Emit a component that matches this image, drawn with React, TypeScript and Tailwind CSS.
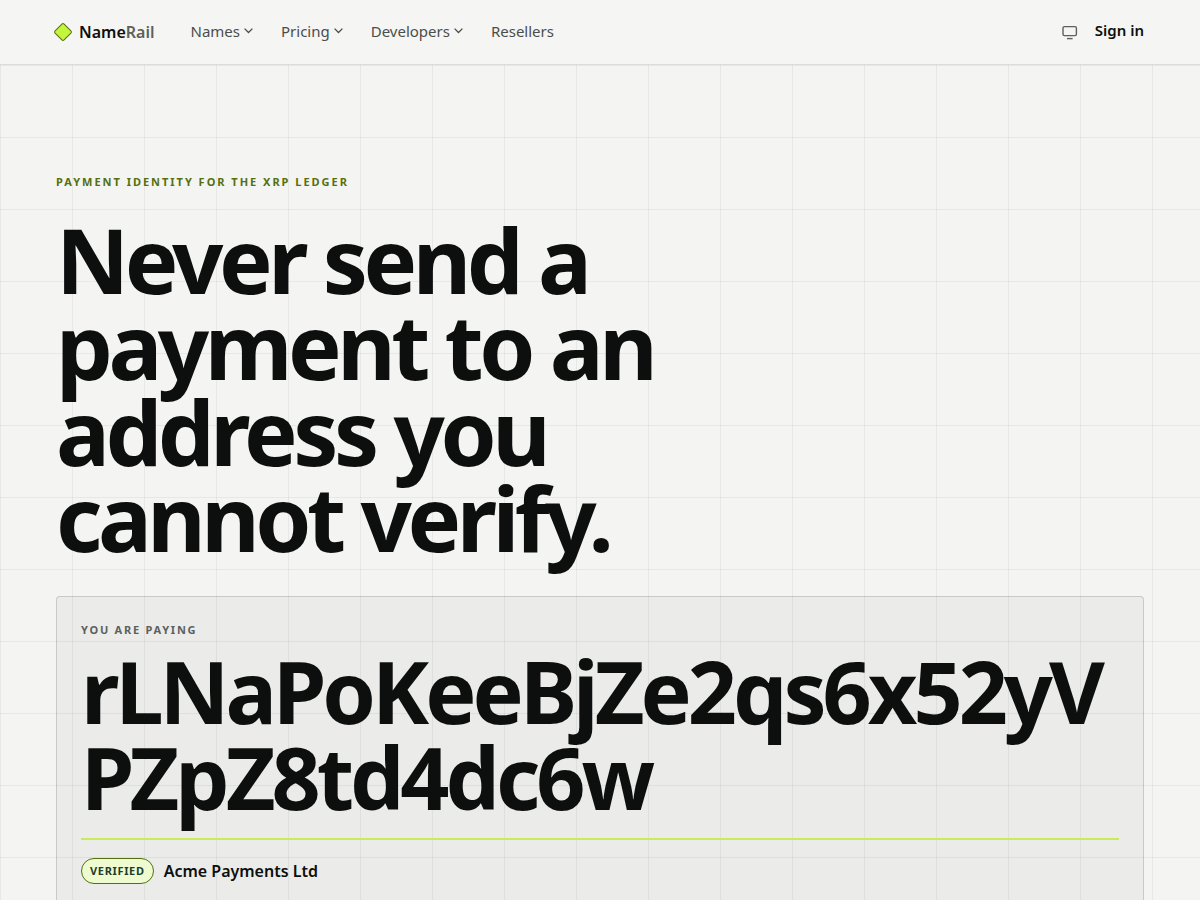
const navItems = [
  { label: "Names", menu: true },
  { label: "Pricing", menu: true },
  { label: "Developers", menu: true },
  { label: "Resellers", menu: false },
];

function Logo() {
  return (
    <a href="#" className="-ml-1 flex items-center gap-[5px] text-base font-semibold text-[#0c0f0d]">
      <svg width="22" height="20" viewBox="0 0 22 20" aria-hidden="true">
        <rect
          x="4.6"
          y="3.6"
          width="12.8"
          height="12.8"
          rx="1.6"
          transform="rotate(45 11 10)"
          fill="#c3f53c"
          stroke="#55700f"
          strokeWidth="1"
        />
      </svg>
      <span>
        Name<span className="text-[#5c615d]">Rail</span>
      </span>
    </a>
  );
}

function NavItem({ label, menu }: { label: string; menu: boolean }) {
  if (!menu) {
    return <a href="#">{label}</a>;
  }
  return (
    <button type="button" className="flex items-center gap-1">
      {label}
      <svg width="9" height="10" viewBox="0 0 9 10" fill="none" stroke="currentColor" strokeWidth="1.3" aria-hidden="true">
        <path d="M.6 2.6 4.5 6.5 8.4 2.6" />
      </svg>
    </button>
  );
}

function Header() {
  return (
    <header className="flex h-[65px] items-center justify-between border-b border-[#dcdddb] bg-[#f5f5f3] px-14">
      <div className="flex items-center gap-9">
        <Logo />
        <nav className="flex items-center gap-7 pb-0.5 text-[15px] text-[#4a4e4b]">
          {navItems.map((item) => (
            <NavItem key={item.label} {...item} />
          ))}
        </nav>
      </div>
      <div className="flex items-center gap-[17px]">
        <button type="button" aria-label="Theme" className="text-[#5c615d]">
          <svg width="16" height="16" viewBox="0 0 16 16" fill="none" stroke="currentColor" strokeWidth="1.4" aria-hidden="true">
            <rect x="1" y="2.6" width="13.4" height="9" rx="1.4" />
            <path d="M5 14.6h5.6" />
          </svg>
        </button>
        <a href="#" className="border-b-2 border-transparent pb-0.5 text-[15px] font-semibold text-[#0c0f0d]">
          Sign in
        </a>
      </div>
    </header>
  );
}

function PayeeCard() {
  return (
    <div className="mt-9 rounded border border-black/15 bg-black/[0.035] p-6">
      <p className="text-[11px] leading-[18px] font-bold tracking-[0.16em] text-[#5c615d] uppercase">You are paying</p>
      <p className="mt-[9px] text-[86px] leading-[86px] font-bold tracking-[-4px] break-all">
        rLNaPoKeeBjZe2qs6x52yVPZpZ8td4dc6w
      </p>
      <div className="mt-[18px] h-0.5 bg-[#cbea5c]" />
      <div className="mt-[18px] flex items-center gap-2.5">
        <span className="rounded-full border border-[#55700f] bg-[#eefbd0] px-2 py-1 text-[11px] leading-4 font-bold tracking-[0.06em] text-[#1f3d2b] uppercase">
          Verified
        </span>
        <span className="text-base font-semibold">Acme Payments Ltd</span>
      </div>
    </div>
  );
}

export default function App() {
  return (
    <div className="min-h-screen bg-[#f4f4f2] font-['Noto_Sans',sans-serif] text-[#0c0f0d]">
      <Header />
      <main className="bg-[linear-gradient(to_right,rgba(12,15,13,0.055)_1px,transparent_1px),linear-gradient(to_bottom,rgba(12,15,13,0.055)_1px,transparent_1px)] bg-size-[72px_72px] px-14 pt-27 pb-16">
        <p className="text-[11px] leading-[18px] font-bold tracking-[0.18em] text-[#55700f] uppercase">
          Payment identity for the XRP Ledger
        </p>
        <h1 className="mt-[25px] max-w-2xl text-[90px] leading-[86px] font-bold tracking-tighter">
          Never send a payment to an address you cannot verify.
        </h1>
        <PayeeCard />
      </main>
    </div>
  );
}
